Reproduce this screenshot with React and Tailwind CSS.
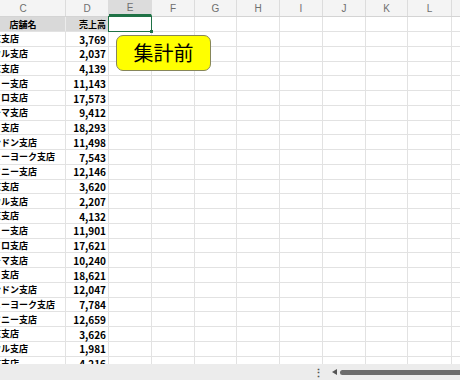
import React from "react";

const COLS = [
  { key: "C", w: "w-[85px]" },
  { key: "D", w: "w-[43px]" },
  { key: "E", w: "w-[43px]" },
  { key: "F", w: "w-[43px]" },
  { key: "G", w: "w-[42px]" },
  { key: "H", w: "w-[43px]" },
  { key: "I", w: "w-[43px]" },
  { key: "J", w: "w-[43px]" },
  { key: "K", w: "w-[42px]" },
  { key: "L", w: "w-[44px]" },
  { key: "M", w: "w-[43px]" },
];

const ROWS = [
  ["東京支店", "3,769"],
  ["ソウル支店", "2,037"],
  ["北京支店", "4,139"],
  ["デリー支店", "11,143"],
  ["カイロ支店", "17,573"],
  ["ローマ支店", "9,412"],
  ["パリ支店", "18,293"],
  ["ロンドン支店", "11,498"],
  ["ニューヨーク支店", "7,543"],
  ["シドニー支店", "12,146"],
  ["東京支店", "3,620"],
  ["ソウル支店", "2,207"],
  ["北京支店", "4,132"],
  ["デリー支店", "11,901"],
  ["カイロ支店", "17,621"],
  ["ローマ支店", "10,240"],
  ["パリ支店", "18,621"],
  ["ロンドン支店", "12,047"],
  ["ニューヨーク支店", "7,784"],
  ["シドニー支店", "12,659"],
  ["東京支店", "3,626"],
  ["ソウル支店", "1,981"],
  ["北京支店", "4,216"],
];

const font = "font-['Noto_Sans_CJK_JP','Noto_Sans',sans-serif]";

function ColumnHeader() {
  return (
    <div className="flex h-[17.4px] border-b border-[#d4d4d4] bg-[#f4f4f4]">
      {COLS.map((c) => (
        <div
          key={c.key}
          className={`${c.w} shrink-0 border-r border-[#dcdcdc] flex items-center justify-center text-[10px] text-[#6f6f6f] font-['Liberation_Sans',sans-serif] ${
            c.key === "E" ? "bg-[#dcdcdc] border-b-2 border-b-[#1f7246]" : ""
          }`}
        >
          {c.key}
        </div>
      ))}
    </div>
  );
}

function TitleRow() {
  return (
    <div className="flex h-[14.76px] border-b border-[#e2e2e2]">
      <div className="w-[85px] shrink-0 bg-[#d9d9d9] border-r border-[#ececec] flex items-center justify-center text-[9px] font-bold text-black">
        店舗名
      </div>
      <div className="w-[43px] shrink-0 bg-[#d9d9d9] border-r border-[#e2e2e2] flex items-center justify-end pr-[2px] text-[9px] font-bold text-black">
        売上高
      </div>
      <div className="w-[43px] shrink-0 relative border-r border-[#e2e2e2]">
        <div className="absolute inset-x-[-1px] top-[-1px] bottom-[-1px] border border-[#1f7246]" />
        <div className="absolute right-[-2px] bottom-[-2px] w-[3px] h-[3px] bg-[#1f7246]" />
      </div>
      {COLS.slice(3).map((c) => (
        <div key={c.key} className={`${c.w} shrink-0 border-r border-[#e2e2e2]`} />
      ))}
    </div>
  );
}

function DataRow({ name, value }) {
  return (
    <div className="flex h-[14.76px] border-b border-[#e2e2e2]">
      <div className="w-[85px] shrink-0 border-r border-[#e2e2e2] flex items-center pl-[2px] text-[9px] font-bold text-black whitespace-nowrap overflow-hidden">
        {name}
      </div>
      <div className="w-[43px] shrink-0 border-r border-[#e2e2e2] flex items-center justify-end pr-[2px] text-[10px] font-bold text-black">
        {value}
      </div>
      {COLS.slice(2).map((c) => (
        <div key={c.key} className={`${c.w} shrink-0 border-r border-[#e2e2e2]`} />
      ))}
    </div>
  );
}

export default function App() {
  return (
    <div className={`w-[460px] h-[380px] bg-white flex flex-col overflow-hidden ${font}`}>
      <div className="relative h-[364px] overflow-hidden">
        <div className="ml-[-19px] w-[520px]">
          <ColumnHeader />
          <TitleRow />
          {ROWS.map(([name, value], i) => (
            <DataRow key={i} name={name} value={value} />
          ))}
        </div>

        <div className="absolute left-[116px] top-[35px] w-[95px] h-[36px] rounded-[7px] border border-[#86865a] bg-[#ffff00] flex items-center justify-center text-[20px] text-black leading-none">
          集計前
        </div>
      </div>

      <div className="h-[16px] bg-[#ececec] flex items-center pl-[313px] gap-[8px]">
        <span className="text-[11px] leading-none text-[#555] font-bold">⋮</span>
        <div className="flex items-center gap-[3px]">
          <div className="w-0 h-0 border-y-[3px] border-y-transparent border-r-[5px] border-r-[#555]" />
          <div className="w-[130px] h-[5px] rounded-full bg-[#6b6b6b]" />
        </div>
      </div>
    </div>
  );
}
